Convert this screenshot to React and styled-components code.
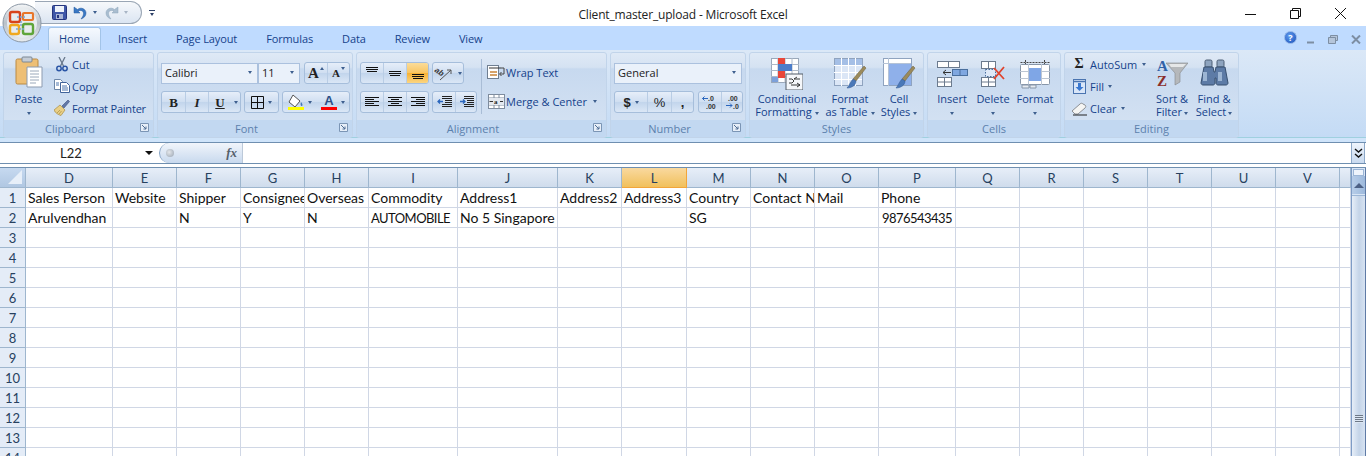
import styled, { createGlobalStyle } from 'styled-components';

const GlobalStyle = createGlobalStyle`
  html, body {
    margin: 0;
    padding: 0;
    background: #ffffff;
    overflow: hidden;
  }
  * { box-sizing: border-box; }
`;

const UI_FONT = '"Open Sans", "Noto Sans", sans-serif';
const CELL_FONT = 'Lato, "Open Sans", sans-serif';

const columns = [
  ['D', 87], ['E', 64], ['F', 64], ['G', 64], ['H', 64], ['I', 89], ['J', 100], ['K', 64],
  ['L', 65], ['M', 64], ['N', 64], ['O', 64], ['P', 77], ['Q', 64], ['R', 64], ['S', 64],
  ['T', 64], ['U', 64], ['V', 64], ['', 11],
];

const sheetData = {
  1: { D: 'Sales Person', E: 'Website', F: 'Shipper', G: 'Consignee', H: 'Overseas', I: 'Commodity', J: 'Address1', K: 'Address2', L: 'Address3', M: 'Country', N: 'Contact No', O: 'Mail', P: 'Phone' },
  2: { D: 'Arulvendhan', F: 'N', G: 'Y', H: 'N', I: 'AUTOMOBILE', J: 'No 5 Singapore', M: 'SG', P: '9876543435' },
};

const rowNumbers = [1, 2, 3, 4, 5, 6, 7, 8, 9, 10, 11, 12, 13, 14];
const tabs = ['Home', 'Insert', 'Page Layout', 'Formulas', 'Data', 'Review', 'View'];

// long all-caps and digit values sit narrow in Calibri, Lato runs wider there
const isCondensed = value => /^[A-Z0-9]{4,}$/.test(value ?? '');

/* ---------- drawings ---------- */

const Orb = () => (
  <svg width="40" height="40" viewBox="0 0 40 40">
    <defs>
      <linearGradient id="orbRing" x1="0" y1="0" x2="0" y2="1">
        <stop offset="0" stopColor="#f4f6f8" />
        <stop offset="0.5" stopColor="#b9c1c9" />
        <stop offset="1" stopColor="#e9edf0" />
      </linearGradient>
    </defs>
    <circle cx="20" cy="20" r="19" fill="url(#orbRing)" stroke="#8c98a6" />
    <circle cx="20" cy="20" r="15" fill="#e8ecef" />
    <rect x="8" y="9" width="10" height="10" rx="2" fill="none" stroke="#d8431c" strokeWidth="2.4" />
    <rect x="21" y="10" width="10" height="7" rx="1" fill="none" stroke="#e8762a" strokeWidth="2.2" />
    <rect x="8" y="22" width="9" height="9" rx="2" fill="none" stroke="#f0a81e" strokeWidth="2.4" />
    <rect x="21" y="21" width="10" height="10" rx="2" fill="none" stroke="#5fa53a" strokeWidth="2.4" />
    <path d="M15 14h8M14 26h8M19 18v5" stroke="#7aa9d6" strokeWidth="1.5" strokeDasharray="2 1" />
  </svg>
);

const SaveIcon = () => (
  <svg width="15" height="15" viewBox="0 0 15 15">
    <rect x="0.5" y="0.5" width="14" height="14" rx="1" fill="#3f57a8" stroke="#26357e" />
    <rect x="3" y="1" width="9" height="6" fill="#eef2fa" />
    <rect x="4" y="9" width="7" height="5" fill="#aab6d6" />
    <rect x="5" y="10" width="2" height="3" fill="#26357e" />
  </svg>
);

const UndoIcon = ({ muted }) => (
  <svg width="14" height="14" viewBox="0 0 14 14">
    <path
      d="M1 1v6h6L5 5c3-1.5 5.500 0 5.500 2.500 0 2-1 3.500-2.500 5.500 3-1 5-3 5-6 0-4-5-6.500-8.500-3.500z"
      fill={muted ? '#a9bdd0' : '#3a78c4'}
      stroke={muted ? '#8fa6bb' : '#24589c'}
      strokeWidth="0.5"
    />
  </svg>
);

const RedoIcon = () => (
  <svg width="14" height="14" viewBox="0 0 14 14">
    <g transform="matrix(-1 0 0 1 14 0)">
      <path
        d="M1 1v6h6L5 5c3-1.5 5.500 0 5.500 2.500 0 2-1 3.500-2.500 5.500 3-1 5-3 5-6 0-4-5-6.500-8.500-3.500z"
        fill="#a9bdd0"
        stroke="#8fa6bb"
        strokeWidth="0.5"
      />
    </g>
  </svg>
);

const PasteIcon = () => (
  <svg width="28" height="32" viewBox="0 0 28 32">
    <rect x="1" y="3" width="22" height="25" rx="1.500" fill="#eebf75" stroke="#b98a45" />
    <rect x="7" y="1" width="10" height="5" rx="1" fill="#c4ccd6" stroke="#7d8894" />
    <path d="M12 11h15v20H12z" fill="#ffffff" stroke="#8d9bb0" />
    <path d="M15 15h9M15 18h9M15 21h9M15 24h9M15 27h6" stroke="#9aa8ba" />
  </svg>
);

const CutIcon = () => (
  <svg width="12" height="15" viewBox="0 0 12 15">
    <path d="M3 0l4.500 9M9 0L4.500 9" stroke="#68788c" strokeWidth="1.300" />
    <circle cx="3" cy="11.500" r="2.200" fill="none" stroke="#2a55a5" strokeWidth="1.500" />
    <circle cx="9" cy="11.500" r="2.200" fill="none" stroke="#2a55a5" strokeWidth="1.500" />
  </svg>
);

const CopyIcon = () => (
  <svg width="16" height="14" viewBox="0 0 16 14">
    <path d="M0.500 0.500h6l2 2v8h-8z" fill="#ffffff" stroke="#6c86a8" />
    <path d="M6.500 3.500h6l3 3v7h-9z" fill="#ffffff" stroke="#41649a" />
    <path d="M2 4h3M2 6h3M8 7h5M8 9h6M8 11h6" stroke="#4d74ac" />
  </svg>
);

const PainterIcon = () => (
  <svg width="16" height="16" viewBox="0 0 16 16">
    <path d="M0 10l6-5 5 5-4 5.500C5 15 1 13 0 10z" fill="#e9cf86" stroke="#a98d42" strokeWidth="0.700" />
    <path d="M8 6l2 2 5.500-6.500-1.500-1.500z" fill="#6277a6" stroke="#3e4f7c" strokeWidth="0.600" />
    <path d="M3 13l3-3M5 14l2.500-3" stroke="#a98d42" strokeWidth="0.700" />
  </svg>
);

const AlignIcon = ({ lines }) => (
  <svg width="14" height="12" viewBox="0 0 14 12">
    {lines.map(([x1, x2, y]) => (
      <line key={y} x1={x1} x2={x2} y1={y + 0.5} y2={y + 0.5} stroke="#111111" />
    ))}
  </svg>
);

const OrientIcon = () => (
  <svg width="20" height="16" viewBox="0 0 20 16">
    <text x="1" y="9" fontFamily="Liberation Sans" fontSize="8" fontStyle="italic" fontWeight="700" fill="#333333" transform="rotate(35 5 6)">ab</text>
    <path d="M6 15L17 5M17 5l-4 0M17 5v4" stroke="#555555" fill="none" />
  </svg>
);

const IndentIcon = ({ flip }) => (
  <svg width="15" height="14" viewBox="0 0 15 14">
    <path d="M5 1.500h10M5 3.500h10M8 5.500h7M8 7.500h7M5 9.500h10M5 11.500h10" stroke="#222222" />
    <path d={flip ? 'M1 6.500h5M4 4.500l2 2-2 2' : 'M6 6.500H1M3 4.500l-2 2 2 2'} stroke="#2a66bd" strokeWidth="1.300" fill="none" />
  </svg>
);

const WrapIcon = () => (
  <svg width="18" height="16" viewBox="0 0 18 16">
    <rect x="0.500" y="1.500" width="11" height="13" fill="#ffffff" stroke="#6f7f92" />
    <path d="M2 4h12" stroke="#333333" />
    <path d="M3 8h7M3 11h7" stroke="#c9853a" strokeWidth="1.500" />
    <path d="M14 4h3v6h-4M14.500 8l-2 2 2 2" stroke="#444444" fill="none" />
  </svg>
);

const MergeIcon = () => (
  <svg width="17" height="15" viewBox="0 0 17 15">
    <rect x="0.500" y="0.500" width="16" height="14" fill="#ffffff" stroke="#7e8c9e" />
    <path d="M1 4h15M1 11h15M6 1v3M11 1v3M6 11v3M11 11v3" stroke="#7e8c9e" />
    <rect x="1" y="4" width="15" height="7" fill="#e3e8ef" />
    <text x="6" y="10" fontFamily="Liberation Serif" fontSize="7" fontWeight="700" fill="#222222">a</text>
    <path d="M1.500 7.500H5M12 7.500h3" stroke="#333333" />
  </svg>
);

const DecimalIcon = ({ increase }) => (
  <svg width="16" height="15" viewBox="0 0 16 15">
    <text x={increase ? 6 : 4} y="6" fontFamily="Liberation Sans" fontSize="7" fontWeight="700" fill="#333333">{increase ? '.0' : '.00'}</text>
    <text x={increase ? 4 : 9} y="14" fontFamily="Liberation Sans" fontSize="7" fontWeight="700" fill="#333333">{increase ? '.00' : '.0'}</text>
    <path d={increase ? 'M6 3.500H0.500M2.500 1.500l-2 2 2 2' : 'M2 10.500h6M6 8.500l2 2-2 2'} stroke="#2a66bd" fill="none" />
  </svg>
);

const BorderIcon = () => (
  <svg width="13" height="13" viewBox="0 0 13 13">
    <path d="M0.500 0.500h12v12h-12zM6.500 0.500v12M0.500 6.500h12" fill="none" stroke="#111111" />
  </svg>
);

const FillIcon = () => (
  <svg width="16" height="16" viewBox="0 0 16 16">
    <path d="M5 1l7 6-5 6-6-5z" fill="#ffffff" stroke="#555555" />
    <path d="M13 8c1.500 2 2 3 1 4-1 .5-2-1-1-4z" fill="#4577b5" />
    <rect x="0" y="13" width="16" height="3" fill="#ffff00" />
  </svg>
);

const GridSvg = ({ children, w = 32, h = 32 }) => (
  <svg width={w} height={h} viewBox={`0 0 ${w} ${h}`}>{children}</svg>
);

const Brush = () => (
  <g>
    <path d="M30 8l2 2-10 13-3-2z" fill="#9b8a5b" stroke="#6d5e38" strokeWidth="0.500" />
    <path d="M19 21l3 2c0 4-4 7-9 7 2-2 3-6 6-9z" fill="#4a78b8" stroke="#2f558e" strokeWidth="0.500" />
  </g>
);

const ConditionalIcon = () => (
  <GridSvg w={32} h={32}>
    <rect x="0.500" y="0.500" width="27" height="24" fill="#ffffff" stroke="#9aa8ba" />
    <path d="M0 6.500h28M0 12.500h28M0 18.500h28M7 0v25M14 0v25M21 0v25" stroke="#aeb9c8" />
    <rect x="7" y="0" width="7" height="7" fill="#e8473a" />
    <rect x="7" y="6" width="14" height="7" fill="#4c7dc9" />
    <rect x="7" y="13" width="7" height="7" fill="#e8473a" />
    <rect x="1" y="19" width="6" height="5" fill="#7ca0da" />
    <rect x="15" y="16" width="17" height="16" fill="#f5f7fa" stroke="#525c68" />
    <path d="M18 21h3l2 2-2 2h-3M26 19l-3 2h6M20 27h9M26 25l3 2-3 2" stroke="#222222" fill="none" strokeWidth="0.900" />
  </GridSvg>
);

const TableIcon = () => (
  <GridSvg w={33} h={32}>
    <rect x="0.500" y="0.500" width="28" height="27" fill="#dbe6f6" stroke="#8fa3bf" />
    <rect x="1" y="1" width="27" height="6" fill="#a5bfe6" />
    <path d="M0 7.500h28M0 14.500h28M0 21.500h28M7.500 0v28M14.500 0v28M21.500 0v28" stroke="#ffffff" />
    <Brush />
  </GridSvg>
);

const CellStylesIcon = () => (
  <GridSvg w={33} h={32}>
    <rect x="0.500" y="0.500" width="28" height="27" fill="#ffffff" stroke="#8fa3bf" />
    <rect x="5" y="5" width="23" height="22" fill="#8fb0ea" />
    <path d="M0 5.500h28M5.500 0v28" stroke="#b5c3d6" />
    <Brush />
  </GridSvg>
);

const InsertIcon = () => (
  <GridSvg w={31} h={26}>
    <rect x="0.500" y="0.500" width="22" height="6" fill="#ffffff" stroke="#6c7b8e" />
    <path d="M11.500 0v7" stroke="#6c7b8e" />
    <rect x="0.500" y="16.500" width="14" height="9" fill="#ffffff" stroke="#6c7b8e" />
    <path d="M7.500 16v10M0 21h14" stroke="#6c7b8e" />
    <rect x="15.500" y="8.500" width="15" height="6" fill="#7fa7e0" stroke="#4a6f9e" />
    <path d="M23 8v7" stroke="#4a6f9e" />
    <path d="M14 11.500H6M9 9l-3 2.500L9 14" stroke="#333333" fill="none" />
  </GridSvg>
);

const DeleteIcon = () => (
  <GridSvg w={24} h={26}>
    <rect x="0.500" y="0.500" width="14" height="7" fill="#ffffff" stroke="#6c7b8e" />
    <rect x="0.500" y="16.500" width="14" height="9" fill="#ffffff" stroke="#6c7b8e" />
    <path d="M7.500 17v9M0 21h14M7.500 0v7" stroke="#6c7b8e" />
    <rect x="4.500" y="8.500" width="10" height="7" fill="#dfe9f7" stroke="#4a6f9e" strokeDasharray="1.500 1.500" />
    <path d="M13 7l10 11M23 6L13 18" stroke="#e0432c" strokeWidth="1.800" />
  </GridSvg>
);

const FormatIcon = () => (
  <GridSvg w={30} h={30}>
    <path d="M0.500 3.500h29M5.500 1v4M24.500 1v4" stroke="#444444" strokeDasharray="2 1" />
    <rect x="0.500" y="5.500" width="29" height="20" rx="1" fill="#ffffff" stroke="#8796a9" />
    <path d="M0 12.500h30M0 19.500h30M8.500 5v21M21.500 5v21" stroke="#bcc6d3" />
    <rect x="9" y="9" width="12" height="13" fill="#7fa6e6" />
    <path d="M2 26h7v3H2zM10 26h6v3h-6z" fill="#e6ebf1" stroke="#8796a9" />
  </GridSvg>
);

const FillDownIcon = () => (
  <svg width="13" height="15" viewBox="0 0 13 15">
    <rect x="0.500" y="0.500" width="12" height="14" fill="#d9e6f8" stroke="#4a74b0" />
    <path d="M0 2.500h13" stroke="#4a74b0" strokeWidth="1.500" />
    <path d="M5 4h3v4h2.500l-4 4-4-4H5z" fill="#3a78d0" />
  </svg>
);

const EraserIcon = () => (
  <svg width="16" height="15" viewBox="0 0 16 15">
    <path d="M1 10l8-7c1-1 2-1 3 0l2 1c1 1 1 2 0 3l-7 6H4z" fill="#f5f5f3" stroke="#8b8f94" />
    <path d="M2 14h14" stroke="#222222" />
  </svg>
);

const SortIcon = () => (
  <GridSvg w={32} h={30}>
    <text x="1" y="13" fontFamily="Liberation Serif" fontWeight="700" fontSize="15" fill="#2f62a8">A</text>
    <text x="1" y="28" fontFamily="Liberation Serif" fontWeight="700" fontSize="15" fill="#8b2e2a">Z</text>
    <path d="M10 5h22l-8 10v9l-5 3V15z" fill="#b5b8bb" stroke="#84888c" strokeWidth="0.600" />
    <path d="M13 6h17l-3 3H15z" fill="#e5e7e8" />
  </GridSvg>
);

const BinocularsIcon = () => (
  <GridSvg w={29} h={27}>
    <rect x="5" y="1" width="7" height="7" rx="1.500" fill="#8ea4bf" stroke="#4d5e75" />
    <rect x="17" y="1" width="7" height="7" rx="1.500" fill="#8ea4bf" stroke="#4d5e75" />
    <path d="M4 8h9l1 5h1l1-5h9l3 16c0 1-1 2-2 2h-8c-1 0-2-1-2-2v-5h-1v5c0 1-1 2-2 2H3c-1 0-2-1-2-2z" fill="#5d7ba6" stroke="#38506f" />
    <rect x="3" y="13" width="4" height="9" fill="#9cb5d3" />
    <rect x="18" y="13" width="4" height="9" fill="#9cb5d3" />
  </GridSvg>
);

const Launcher = () => (
  <svg width="9" height="9" viewBox="0 0 9 9">
    <path d="M0.500 0.500h8v8h-8z" fill="#e6eef8" stroke="#7b95b5" />
    <path d="M2 2l4 4M6 3.500V6H3.500" stroke="#4e6d94" fill="none" />
  </svg>
);

/* ---------- title bar ---------- */

const Page = styled.div`
  position: relative;
  width: 1366px;
  height: 456px;
  overflow: hidden;
  background: #ffffff;
  font-family: ${UI_FONT};
`;

const TitleBar = styled.div`
  position: relative;
  display: grid;
  grid-template-columns: 1fr auto 1fr;
  align-items: center;
  height: 26px;
  background: #ffffff;
`;

const OrbSlot = styled.div`
  position: absolute;
  left: 2px;
  top: 3px;
  z-index: 3;
  display: flex;
`;

const AccentLine = styled.div`
  position: absolute;
  left: 562px;
  top: 0;
  width: 24px;
  height: 1px;
  background: #2c8fd8;
`;

const QuickAccessRow = styled.div`
  display: flex;
  align-items: center;
`;

const QuickAccess = styled.div`
  display: flex;
  align-items: center;
  width: 107px;
  height: 23px;
  margin-left: 35px;
  margin-top: -1px;
  padding-left: 17px;
  background: linear-gradient(#f6f8fb, #dbe5f2);
  border: 1px solid #9aa6b5;
  border-left: none;
  border-radius: 0 12px 12px 0;
`;

const QuickSlot = styled.div`
  display: flex;
  margin-left: ${p => p.$left ?? 0}px;
`;

const Caret = styled.span`
  display: inline-block;
  flex: none;
  width: 0;
  height: 0;
  margin-left: ${p => p.$gap ?? 0}px;
  border-left: 2.5px solid transparent;
  border-right: 2.5px solid transparent;
  border-top: 3px solid ${p => p.$color ?? '#3e5f8f'};
  vertical-align: middle;
`;

const CustomizeMark = styled.div`
  width: 6px;
  height: 7px;
  margin-left: 7px;
  border-top: 1px solid #2c3f66;
  display: flex;
  align-items: flex-end;
  justify-content: center;
  padding-bottom: 1px;
`;

const WindowTitle = styled.div`
  padding-top: 2px;
  font-size: 12px;
  color: #222222;
  white-space: nowrap;
  letter-spacing: -0.17px;
`;

const WindowButtons = styled.div`
  display: flex;
  justify-content: flex-end;
  align-items: center;
  gap: 34px;
  padding-right: 20px;
`;

/* ---------- tabs ---------- */

const TabStrip = styled.div`
  display: flex;
  align-items: flex-end;
  height: 24px;
  padding-left: 48px;
  background: #bfdbff;
`;

const Tab = styled.div`
  display: flex;
  align-items: center;
  justify-content: center;
  height: ${p => (p.$active ? 23 : 22)}px;
  padding: 0 ${p => (p.$active ? 10 : 14.5)}px 2px;
  font-size: 11px;
  letter-spacing: -0.12px;
  color: #15428b;
  white-space: nowrap;
  border-radius: 3px 3px 0 0;
  ${p => p.$active && `
    background: linear-gradient(#f5f9fe, #dce7f5);
    border: 1px solid #a3c4e8;
    border-bottom: none;
    margin-right: 3px;
  `}
`;

const HelpControls = styled.div`
  display: flex;
  align-items: center;
  gap: 13px;
  margin-left: auto;
  height: 22px;
  padding-right: 5px;
`;

const HelpBadge = styled.div`
  width: 13px;
  height: 13px;
  margin-right: -4px;
  margin-bottom: 4px;
  border-radius: 50%;
  background: radial-gradient(circle at 40% 35%, #5f9bf0, #1a4fb8);
  border: 1px solid #8fb2e6;
  color: #ffffff;
  font-size: 9px;
  font-weight: 700;
  line-height: 11px;
  text-align: center;
`;

/* ---------- ribbon ---------- */

const Ribbon = styled.div`
  display: flex;
  gap: 3px;
  height: 88px;
  padding: 2px 0 0 3px;
  background: linear-gradient(#dbe8f7, #c4dbf5);
  border-bottom: 1px solid #9fd0df;
`;

const Group = styled.section`
  display: flex;
  flex-direction: column;
  flex: none;
  width: ${p => p.$width}px;
  height: 86px;
  border: 1px solid #c1d4ea;
  border-radius: 3px;
  overflow: hidden;
  background: linear-gradient(#dfe9f6 0%, #d5e2f2 17%, #c7d9ef 19%, #d6e3f3 100%);
`;

const GroupBody = styled.div`
  display: flex;
  flex: 1;
  min-height: 0;
  gap: ${p => p.$gap ?? 0}px;
  padding: ${p => p.$pad ?? '0'};
`;

const GroupLabel = styled.div`
  position: relative;
  flex: none;
  height: 17px;
  padding-right: ${p => (p.$launcher ? 17 : 0)}px;
  font-size: 11px;
  line-height: 17px;
  text-align: center;
  color: #5c81ad;
  background: #c2d8f1;
`;

const LauncherSlot = styled.div`
  position: absolute;
  right: 4px;
  top: 3px;
  display: flex;
`;

const LargeButton = styled.div`
  display: flex;
  flex-direction: column;
  align-items: center;
  flex: none;
  width: ${p => p.$width}px;
  font-size: 11px;
  line-height: 13px;
  color: #15428b;
  text-align: center;
  white-space: nowrap;
`;

const LargeIcon = styled.div`
  display: flex;
  align-items: center;
  justify-content: center;
  height: ${p => p.$height ?? 34}px;
  margin-bottom: ${p => p.$below ?? 1}px;
`;

const SmallColumn = styled.div`
  display: flex;
  flex-direction: column;
  flex: none;
  gap: ${p => p.$gap ?? 2}px;
  padding-top: ${p => p.$top ?? 0}px;
`;

const SmallButton = styled.div`
  display: flex;
  align-items: center;
  height: 20px;
  font-size: 11px;
  letter-spacing: ${p => (p.$tight ? '-0.2px' : 'normal')};
  color: #15428b;
  white-space: nowrap;
`;

const SmallIcon = styled.div`
  display: flex;
  align-items: center;
  justify-content: center;
  width: ${p => p.$width ?? 18}px;
  margin-right: ${p => p.$gap ?? 1}px;
`;

const ToolRow = styled.div`
  display: flex;
  align-items: center;
  gap: ${p => p.$gap ?? 3}px;
  height: 22px;
`;

const ComboBox = styled.div`
  display: flex;
  align-items: center;
  justify-content: space-between;
  width: ${p => p.$width}px;
  height: 21px;
  padding: 0 5px 1px 3px;
  background: #eaf1fa;
  border: 1px solid #abc1de;
  font-size: 11px;
  color: #222222;
`;

const ButtonSet = styled.div`
  display: flex;
  height: 22px;
  border: 1px solid #a6bedb;
  border-radius: 3px;
  overflow: hidden;
  background: linear-gradient(#e6eef9, #cfdef1 50%, #c2d5ec 52%, #dbe7f6);
`;

const SetButton = styled.div`
  display: flex;
  align-items: center;
  justify-content: center;
  gap: 1px;
  width: ${p => p.$width ?? 23}px;
  height: 100%;
  color: #222222;
  border-left: ${p => (p.$first ? 'none' : '1px solid #b9cde5')};
  ${p => p.$active && 'background: linear-gradient(#fbdc99, #f9c561 50%, #f7b235 52%, #fcd581);'}
`;

const Glyph = styled.span`
  font-family: ${p => p.$family ?? '"Liberation Serif", serif'};
  font-size: ${p => p.$size ?? 13}px;
  font-weight: ${p => p.$weight ?? 700};
  font-style: ${p => (p.$italic ? 'italic' : 'normal')};
  text-decoration: ${p => (p.$underline ? 'underline' : 'none')};
  color: #222222;
  line-height: 1;
`;

const SizeMark = styled.span`
  align-self: flex-start;
  margin-top: 4px;
  width: 0;
  height: 0;
  border-left: 2.5px solid transparent;
  border-right: 2.5px solid transparent;
  ${p => (p.$down ? 'border-top: 3px solid #3e5f8f;' : 'border-bottom: 3px solid #3e5f8f;')}
`;

const ColorGlyph = styled.div`
  display: flex;
  flex-direction: column;
  align-items: center;
  width: 16px;
  line-height: 11px;
  font-family: "Liberation Sans", sans-serif;
  font-size: 13px;
  font-weight: 700;
  color: #2c4f86;
`;

const ColorBar = styled.div`
  width: 16px;
  height: 3px;
  margin-top: 1px;
  background: ${p => p.$color};
`;

const Divider = styled.div`
  flex: none;
  width: 1px;
  height: 55px;
  margin: 6px 5px 0 4px;
  background: #a9bdd6;
`;

const ToolColumn = styled.div`
  display: flex;
  flex-direction: column;
  flex: none;
  gap: 7px;
  padding-top: 9px;
`;

const ArrowButton = styled.div`
  display: flex;
  align-items: center;
  justify-content: center;
  gap: 4px;
  width: ${p => p.$width ?? 23}px;
  height: 100%;
`;

const FontRowInset = styled.div`
  display: flex;
  align-items: center;
  padding-left: 3px;
`;

const Spacer = styled.div`
  flex: none;
  width: ${p => p.$w}px;
`;

const Filler = styled.div`
  flex: 1;
`;

/* ---------- formula bar ---------- */

const FormulaZone = styled.div`
  height: 30px;
  padding-top: 4px;
  background: linear-gradient(#cfe4fa 0 4px, #ffffff 4px);
`;

const FormulaBar = styled.div`
  display: flex;
  align-items: stretch;
  height: 22px;
  background: #ffffff;
  border-top: 1px solid #6f8fb0;
  border-bottom: 1px solid #6f8fb0;
`;

const NameBox = styled.div`
  position: relative;
  display: flex;
  align-items: center;
  justify-content: center;
  flex: none;
  width: 153px;
  margin-left: 1px;
  padding-right: 13px;
  font-family: ${CELL_FONT};
  font-size: 13px;
  color: #222222;
`;

const NameCaret = styled.span`
  position: absolute;
  right: 1px;
  top: 8px;
  width: 0;
  height: 0;
  border-left: 4px solid transparent;
  border-right: 4px solid transparent;
  border-top: 4px solid #111111;
`;

const FormulaPill = styled.div`
  display: flex;
  align-items: center;
  justify-content: space-between;
  flex: none;
  width: 84px;
  margin-left: 5px;
  padding: 0 5px 0 6px;
  background: linear-gradient(#f1f5fb, #c8d9ee);
  border-left: 1px solid #86a3c4;
  border-right: 1px solid #bcc9d9;
  border-radius: 10px 0 0 10px;
`;

const PillDot = styled.span`
  width: 8px;
  height: 8px;
  border-radius: 50%;
  background: radial-gradient(circle at 40% 40%, #e4e7eb, #98a3b0);
`;

const FxText = styled.span`
  font-family: "Liberation Serif", serif;
  font-style: italic;
  font-weight: 700;
  font-size: 13px;
  color: #555f6c;
`;

const FormulaInput = styled.div`
  flex: 1;
`;

const ExpandButton = styled.div`
  display: flex;
  flex-direction: column;
  align-items: center;
  justify-content: center;
  flex: none;
  width: 14px;
  margin-right: 1px;
  background: linear-gradient(#eef4fc, #c9daef);
  border: 1px solid #8da8c8;
  border-width: 0 1px;
`;

/* ---------- sheet ---------- */

const Sheet = styled.div`
  display: flex;
  height: 290px;
  overflow: hidden;
  border-top: 1px solid #6f8fb0;
  margin-top: -1px;
`;

const GridArea = styled.div`
  flex: none;
  width: 1351px;
  overflow: hidden;
`;

const Row = styled.div`
  display: flex;
  height: 20px;
`;

const CornerCell = styled.div`
  position: relative;
  flex: none;
  width: 26px;
  background: linear-gradient(#c6d9f0, #b0c7e2);
  border-right: 1px solid #9eb6ce;
  border-bottom: 1px solid #9eb6ce;
`;

const CornerMark = styled.span`
  position: absolute;
  right: 3px;
  bottom: 3px;
  width: 0;
  height: 0;
  border-left: 14px solid transparent;
  border-bottom: 14px solid #e7eff9;
`;

const ColumnHead = styled.div`
  flex: none;
  width: ${p => p.$width}px;
  padding-top: 1px;
  font-family: ${CELL_FONT};
  font-size: 13px;
  line-height: 19px;
  text-align: center;
  color: #27415f;
  background: ${p => (p.$selected
    ? 'linear-gradient(#f9d99f, #f1c05c)'
    : 'linear-gradient(#e7eef8, #cfdcec)')};
  border-right: 1px solid ${p => (p.$selected ? '#f2a53a' : '#9eb6ce')};
  border-bottom: 1px solid ${p => (p.$selected ? '#f2a53a' : '#9eb6ce')};
`;

const RowHead = styled.div`
  flex: none;
  width: 26px;
  padding-top: 1px;
  font-family: ${CELL_FONT};
  font-size: 13px;
  line-height: 18px;
  text-align: center;
  color: #27415f;
  background: #e4ecf7;
  border-right: 1px solid #9eb6ce;
  border-bottom: 1px solid #9eb6ce;
`;

const Cell = styled.div`
  flex: none;
  width: ${p => p.$width}px;
  padding: 1px ${p => (p.$number ? 3 : 2)}px 0 2px;
  overflow: hidden;
  white-space: nowrap;
  font-family: ${CELL_FONT};
  font-size: ${p => (p.$condensed ? 13 : 14)}px;
  letter-spacing: ${p => (p.$condensed ? '-0.55px' : 'normal')};
  line-height: 18px;
  color: #111111;
  text-align: ${p => (p.$number ? 'right' : 'left')};
  border-right: 1px solid #d0d7e5;
  border-bottom: 1px solid #d0d7e5;
`;

const ScrollBar = styled.div`
  display: flex;
  flex-direction: column;
  flex: none;
  width: 15px;
  background: #d8e5f5;
  border-left: 1px solid #7e9cc6;
  border-right: 1px solid #5f7ba6;
`;

const SplitBox = styled.div`
  flex: none;
  height: 7px;
  margin: 1px 1px 0;
  background: #eef4fc;
  border: 1px solid #9cb6d6;
`;

const ScrollArrow = styled.div`
  display: flex;
  align-items: center;
  justify-content: center;
  flex: none;
  height: 18px;
  background: linear-gradient(90deg, #b7cde8, #9db9dc);
`;

const ArrowUp = styled.span`
  width: 0;
  height: 0;
  border-left: 5px solid transparent;
  border-right: 5px solid transparent;
  border-bottom: 5px solid #4d6185;
`;

const ScrollThumb = styled.div`
  display: flex;
  justify-content: center;
  flex: 1;
  padding-top: 219px;
  margin-top: 1px;
  background: linear-gradient(90deg, #e6eef8, #c4d4e8 55%, #d7e3f2);
  border-top: 1px solid #9cb6d6;
`;

const Grip = styled.div`
  width: 8px;
  height: 8px;
  background: repeating-linear-gradient(#6d7886 0 1px, #dce6f3 1px 2px);
`;

function ClipboardGroup() {
  return (
    <Group $width={151}>
      <GroupBody $pad="1px 0 0 0">
        <LargeButton $width={49}>
          <LargeIcon $height={35} $below={3}><PasteIcon /></LargeIcon>
          Paste
          <div><Caret /></div>
        </LargeButton>
        <SmallColumn $gap={2}>
          <SmallButton><SmallIcon><CutIcon /></SmallIcon>Cut</SmallButton>
          <SmallButton><SmallIcon><CopyIcon /></SmallIcon>Copy</SmallButton>
          <SmallButton $tight><SmallIcon><PainterIcon /></SmallIcon>Format Painter</SmallButton>
        </SmallColumn>
      </GroupBody>
      <GroupLabel $launcher>Clipboard<LauncherSlot><Launcher /></LauncherSlot></GroupLabel>
    </Group>
  );
}

function FontGroup() {
  return (
    <Group $width={196}>
      <ToolColumn>
        <ToolRow>
          <FontRowInset>
            <ComboBox $width={97}>Calibri<Caret /></ComboBox>
            <ComboBox $width={42}>11<Caret /></ComboBox>
            <Spacer $w={4} />
            <ButtonSet>
              <SetButton $first $width={22}><Glyph $size={15}>A</Glyph><SizeMark /></SetButton>
              <SetButton $width={22}><Glyph $size={11}>A</Glyph><SizeMark $down /></SetButton>
            </ButtonSet>
          </FontRowInset>
        </ToolRow>
        <ToolRow>
          <FontRowInset>
            <ButtonSet>
              <SetButton $first $width={23}><Glyph>B</Glyph></SetButton>
              <SetButton><Glyph $italic>I</Glyph></SetButton>
              <SetButton><Glyph $underline>U</Glyph></SetButton>
              <ArrowButton $width={9}><Caret /></ArrowButton>
            </ButtonSet>
            <Spacer $w={3} />
            <ButtonSet>
              <ArrowButton $width={33}><BorderIcon /><Caret /></ArrowButton>
            </ButtonSet>
            <Spacer $w={3} />
            <ButtonSet>
              <ArrowButton $width={34}><FillIcon /><Caret /></ArrowButton>
              <ArrowButton $width={32}>
                <ColorGlyph>A<ColorBar $color="#ff0000" /></ColorGlyph>
                <Caret />
              </ArrowButton>
            </ButtonSet>
          </FontRowInset>
        </ToolRow>
      </ToolColumn>
      <Filler />
      <GroupLabel $launcher>Font<LauncherSlot><Launcher /></LauncherSlot></GroupLabel>
    </Group>
  );
}

const topAlign = [[1, 13, 0], [1, 13, 2], [2, 12, 4]];
const midAlign = [[1, 13, 4], [1, 13, 6], [2, 12, 8]];
const botAlign = [[1, 13, 7], [1, 13, 9], [2, 12, 11]];
const leftAlign = [[0, 14, 1], [0, 9, 3], [0, 14, 5], [0, 9, 7], [0, 14, 9]];
const centerAlign = [[0, 14, 1], [3, 11, 3], [0, 14, 5], [3, 11, 7], [0, 14, 9]];
const rightAlign = [[0, 14, 1], [5, 14, 3], [0, 14, 5], [5, 14, 7], [0, 14, 9]];

function AlignmentGroup() {
  return (
    <Group $width={251}>
      <GroupBody $pad="0 0 0 3px">
        <ToolColumn>
          <ToolRow>
            <ButtonSet>
              <SetButton $first $width={22}><AlignIcon lines={topAlign} /></SetButton>
              <SetButton $width={23}><AlignIcon lines={midAlign} /></SetButton>
              <SetButton $width={22} $active><AlignIcon lines={botAlign} /></SetButton>
            </ButtonSet>
            <ButtonSet>
              <ArrowButton $width={30}><OrientIcon /><Caret /></ArrowButton>
            </ButtonSet>
          </ToolRow>
          <ToolRow>
            <ButtonSet>
              <SetButton $first $width={22}><AlignIcon lines={leftAlign} /></SetButton>
              <SetButton $width={23}><AlignIcon lines={centerAlign} /></SetButton>
              <SetButton $width={22}><AlignIcon lines={rightAlign} /></SetButton>
            </ButtonSet>
            <ButtonSet>
              <SetButton $first $width={22}><IndentIcon /></SetButton>
              <SetButton $width={21}><IndentIcon flip /></SetButton>
            </ButtonSet>
          </ToolRow>
        </ToolColumn>
        <Divider />
        <SmallColumn $gap={9} $top={9}>
          <SmallButton><SmallIcon><WrapIcon /></SmallIcon>Wrap Text</SmallButton>
          <SmallButton><SmallIcon><MergeIcon /></SmallIcon>Merge &amp; Center<Caret $gap={6} /></SmallButton>
        </SmallColumn>
      </GroupBody>
      <GroupLabel $launcher>Alignment<LauncherSlot><Launcher /></LauncherSlot></GroupLabel>
    </Group>
  );
}

function NumberGroup() {
  return (
    <Group $width={136}>
      <GroupBody $pad="0 0 0 3px">
        <ToolColumn>
          <ToolRow>
            <ComboBox $width={128}>General<Caret /></ComboBox>
          </ToolRow>
          <ToolRow $gap={4}>
            <ButtonSet>
              <ArrowButton $width={32}><Glyph $family='"Liberation Sans", sans-serif' $size={13}>$</Glyph><Caret /></ArrowButton>
              <SetButton $width={24}><Glyph $family='"Liberation Sans", sans-serif' $size={13} $weight={400}>%</Glyph></SetButton>
              <SetButton $width={22}><Glyph $family='"Liberation Sans", sans-serif' $size={13}>,</Glyph></SetButton>
            </ButtonSet>
            <ButtonSet>
              <SetButton $first $width={22}><DecimalIcon increase /></SetButton>
              <SetButton $width={21}><DecimalIcon /></SetButton>
            </ButtonSet>
          </ToolRow>
        </ToolColumn>
      </GroupBody>
      <GroupLabel $launcher>Number<LauncherSlot><Launcher /></LauncherSlot></GroupLabel>
    </Group>
  );
}

function StylesGroup() {
  return (
    <Group $width={175}>
      <GroupBody $pad="4px 0 0 2px">
        <LargeButton $width={70}>
          <LargeIcon><ConditionalIcon /></LargeIcon>
          Conditional
          <div>Formatting<Caret $gap={3} /></div>
        </LargeButton>
        <LargeButton $width={56}>
          <LargeIcon><TableIcon /></LargeIcon>
          Format
          <div>as Table<Caret $gap={3} /></div>
        </LargeButton>
        <LargeButton $width={42}>
          <LargeIcon><CellStylesIcon /></LargeIcon>
          Cell
          <div>Styles<Caret $gap={3} /></div>
        </LargeButton>
      </GroupBody>
      <GroupLabel>Styles</GroupLabel>
    </Group>
  );
}

function CellsGroup() {
  return (
    <Group $width={134}>
      <GroupBody $pad="4px 0 0 3px">
        <LargeButton $width={42}>
          <LargeIcon><InsertIcon /></LargeIcon>
          Insert
          <div><Caret /></div>
        </LargeButton>
        <LargeButton $width={40}>
          <LargeIcon><DeleteIcon /></LargeIcon>
          Delete
          <div><Caret /></div>
        </LargeButton>
        <LargeButton $width={44}>
          <LargeIcon><FormatIcon /></LargeIcon>
          Format
          <div><Caret /></div>
        </LargeButton>
      </GroupBody>
      <GroupLabel>Cells</GroupLabel>
    </Group>
  );
}

function EditingGroup() {
  return (
    <Group $width={175}>
      <GroupBody $pad="1px 0 0 5px">
        <SmallColumn $gap={2}>
          <SmallButton><SmallIcon $gap={2}><Glyph $size={14}>Σ</Glyph></SmallIcon>AutoSum<Caret $gap={5} /></SmallButton>
          <SmallButton><SmallIcon $gap={2}><FillDownIcon /></SmallIcon>Fill<Caret $gap={4} /></SmallButton>
          <SmallButton><SmallIcon $gap={2}><EraserIcon /></SmallIcon>Clear<Caret $gap={4} /></SmallButton>
        </SmallColumn>
        <Filler />
        <LargeButton $width={42}>
          <LargeIcon $height={37} $below={1}><SortIcon /></LargeIcon>
          Sort &amp;
          <div>Filter<Caret $gap={2} /></div>
        </LargeButton>
        <LargeButton $width={42}>
          <LargeIcon $height={37} $below={1}><BinocularsIcon /></LargeIcon>
          Find &amp;
          <div>Select<Caret $gap={2} /></div>
        </LargeButton>
        <Spacer $w={3} />
      </GroupBody>
      <GroupLabel>Editing</GroupLabel>
    </Group>
  );
}

export default function App() {
  return (
    <Page>
      <GlobalStyle />
      <OrbSlot><Orb /></OrbSlot>
      <AccentLine />
      <TitleBar>
        <QuickAccessRow>
          <QuickAccess>
            <SaveIcon />
            <QuickSlot $left={6}><UndoIcon /></QuickSlot>
            <Caret $gap={6} />
            <QuickSlot $left={8}><RedoIcon /></QuickSlot>
            <Caret $gap={5} $color="#a8b5c5" />
          </QuickAccess>
          <CustomizeMark><Caret $color="#2c3f66" /></CustomizeMark>
        </QuickAccessRow>
        <WindowTitle>Client_master_upload - Microsoft Excel</WindowTitle>
        <WindowButtons>
          <svg width="11" height="11" viewBox="0 0 11 11"><path d="M0 6.500h11" stroke="#111111" /></svg>
          <svg width="11" height="11" viewBox="0 0 11 11"><path d="M0.500 2.500h8v8h-8zM2.500 2.500v-2h8v8h-2" fill="none" stroke="#111111" /></svg>
          <svg width="11" height="11" viewBox="0 0 11 11"><path d="M0 0l11 11M11 0L0 11" stroke="#111111" /></svg>
        </WindowButtons>
      </TitleBar>

      <TabStrip>
        {tabs.map((tab, i) => (
          <Tab key={tab} $active={i === 0}>{tab}</Tab>
        ))}
        <HelpControls>
          <HelpBadge>?</HelpBadge>
          <svg width="9" height="9" viewBox="0 0 9 9"><path d="M1 7.500h7" stroke="#7d8ea3" strokeWidth="2" /></svg>
          <svg width="10" height="9" viewBox="0 0 10 9"><path d="M0.500 2.500h7v6h-7zM2.500 2V0.500h7v5H8" fill="#b5c5da" stroke="#7d8ea3" /></svg>
          <svg width="10" height="9" viewBox="0 0 10 9"><path d="M1 0.500l8 8M9 0.500l-8 8" stroke="#7d8ea3" strokeWidth="2" /></svg>
        </HelpControls>
      </TabStrip>

      <Ribbon>
        <ClipboardGroup />
        <FontGroup />
        <AlignmentGroup />
        <NumberGroup />
        <StylesGroup />
        <CellsGroup />
        <EditingGroup />
      </Ribbon>

      <FormulaZone>
        <FormulaBar>
          <NameBox>L22<NameCaret /></NameBox>
          <FormulaPill><PillDot /><FxText>fx</FxText></FormulaPill>
          <FormulaInput />
          <ExpandButton>
            <svg width="9" height="11" viewBox="0 0 9 11">
              <path d="M1 1l3.500 3L8 1M1 6l3.500 3L8 6" fill="none" stroke="#111111" strokeWidth="1.400" />
            </svg>
          </ExpandButton>
        </FormulaBar>
      </FormulaZone>

      <Sheet>
        <GridArea>
          <Row>
            <CornerCell><CornerMark /></CornerCell>
            {columns.map(([name, width]) => (
              <ColumnHead key={name || 'rest'} $width={width} $selected={name === 'L'}>{name}</ColumnHead>
            ))}
          </Row>
          {rowNumbers.map(row => (
            <Row key={row}>
              <RowHead>{row}</RowHead>
              {columns.map(([name, width]) => {
                const value = sheetData[row]?.[name];
                return (
                  <Cell
                    key={name || 'rest'}
                    $width={width}
                    $number={/^\d+$/.test(value ?? '')}
                    $condensed={isCondensed(value)}
                  >
                    {value}
                  </Cell>
                );
              })}
            </Row>
          ))}
        </GridArea>
        <ScrollBar>
          <SplitBox />
          <ScrollArrow><ArrowUp /></ScrollArrow>
          <ScrollThumb><Grip /></ScrollThumb>
        </ScrollBar>
      </Sheet>
    </Page>
  );
}
